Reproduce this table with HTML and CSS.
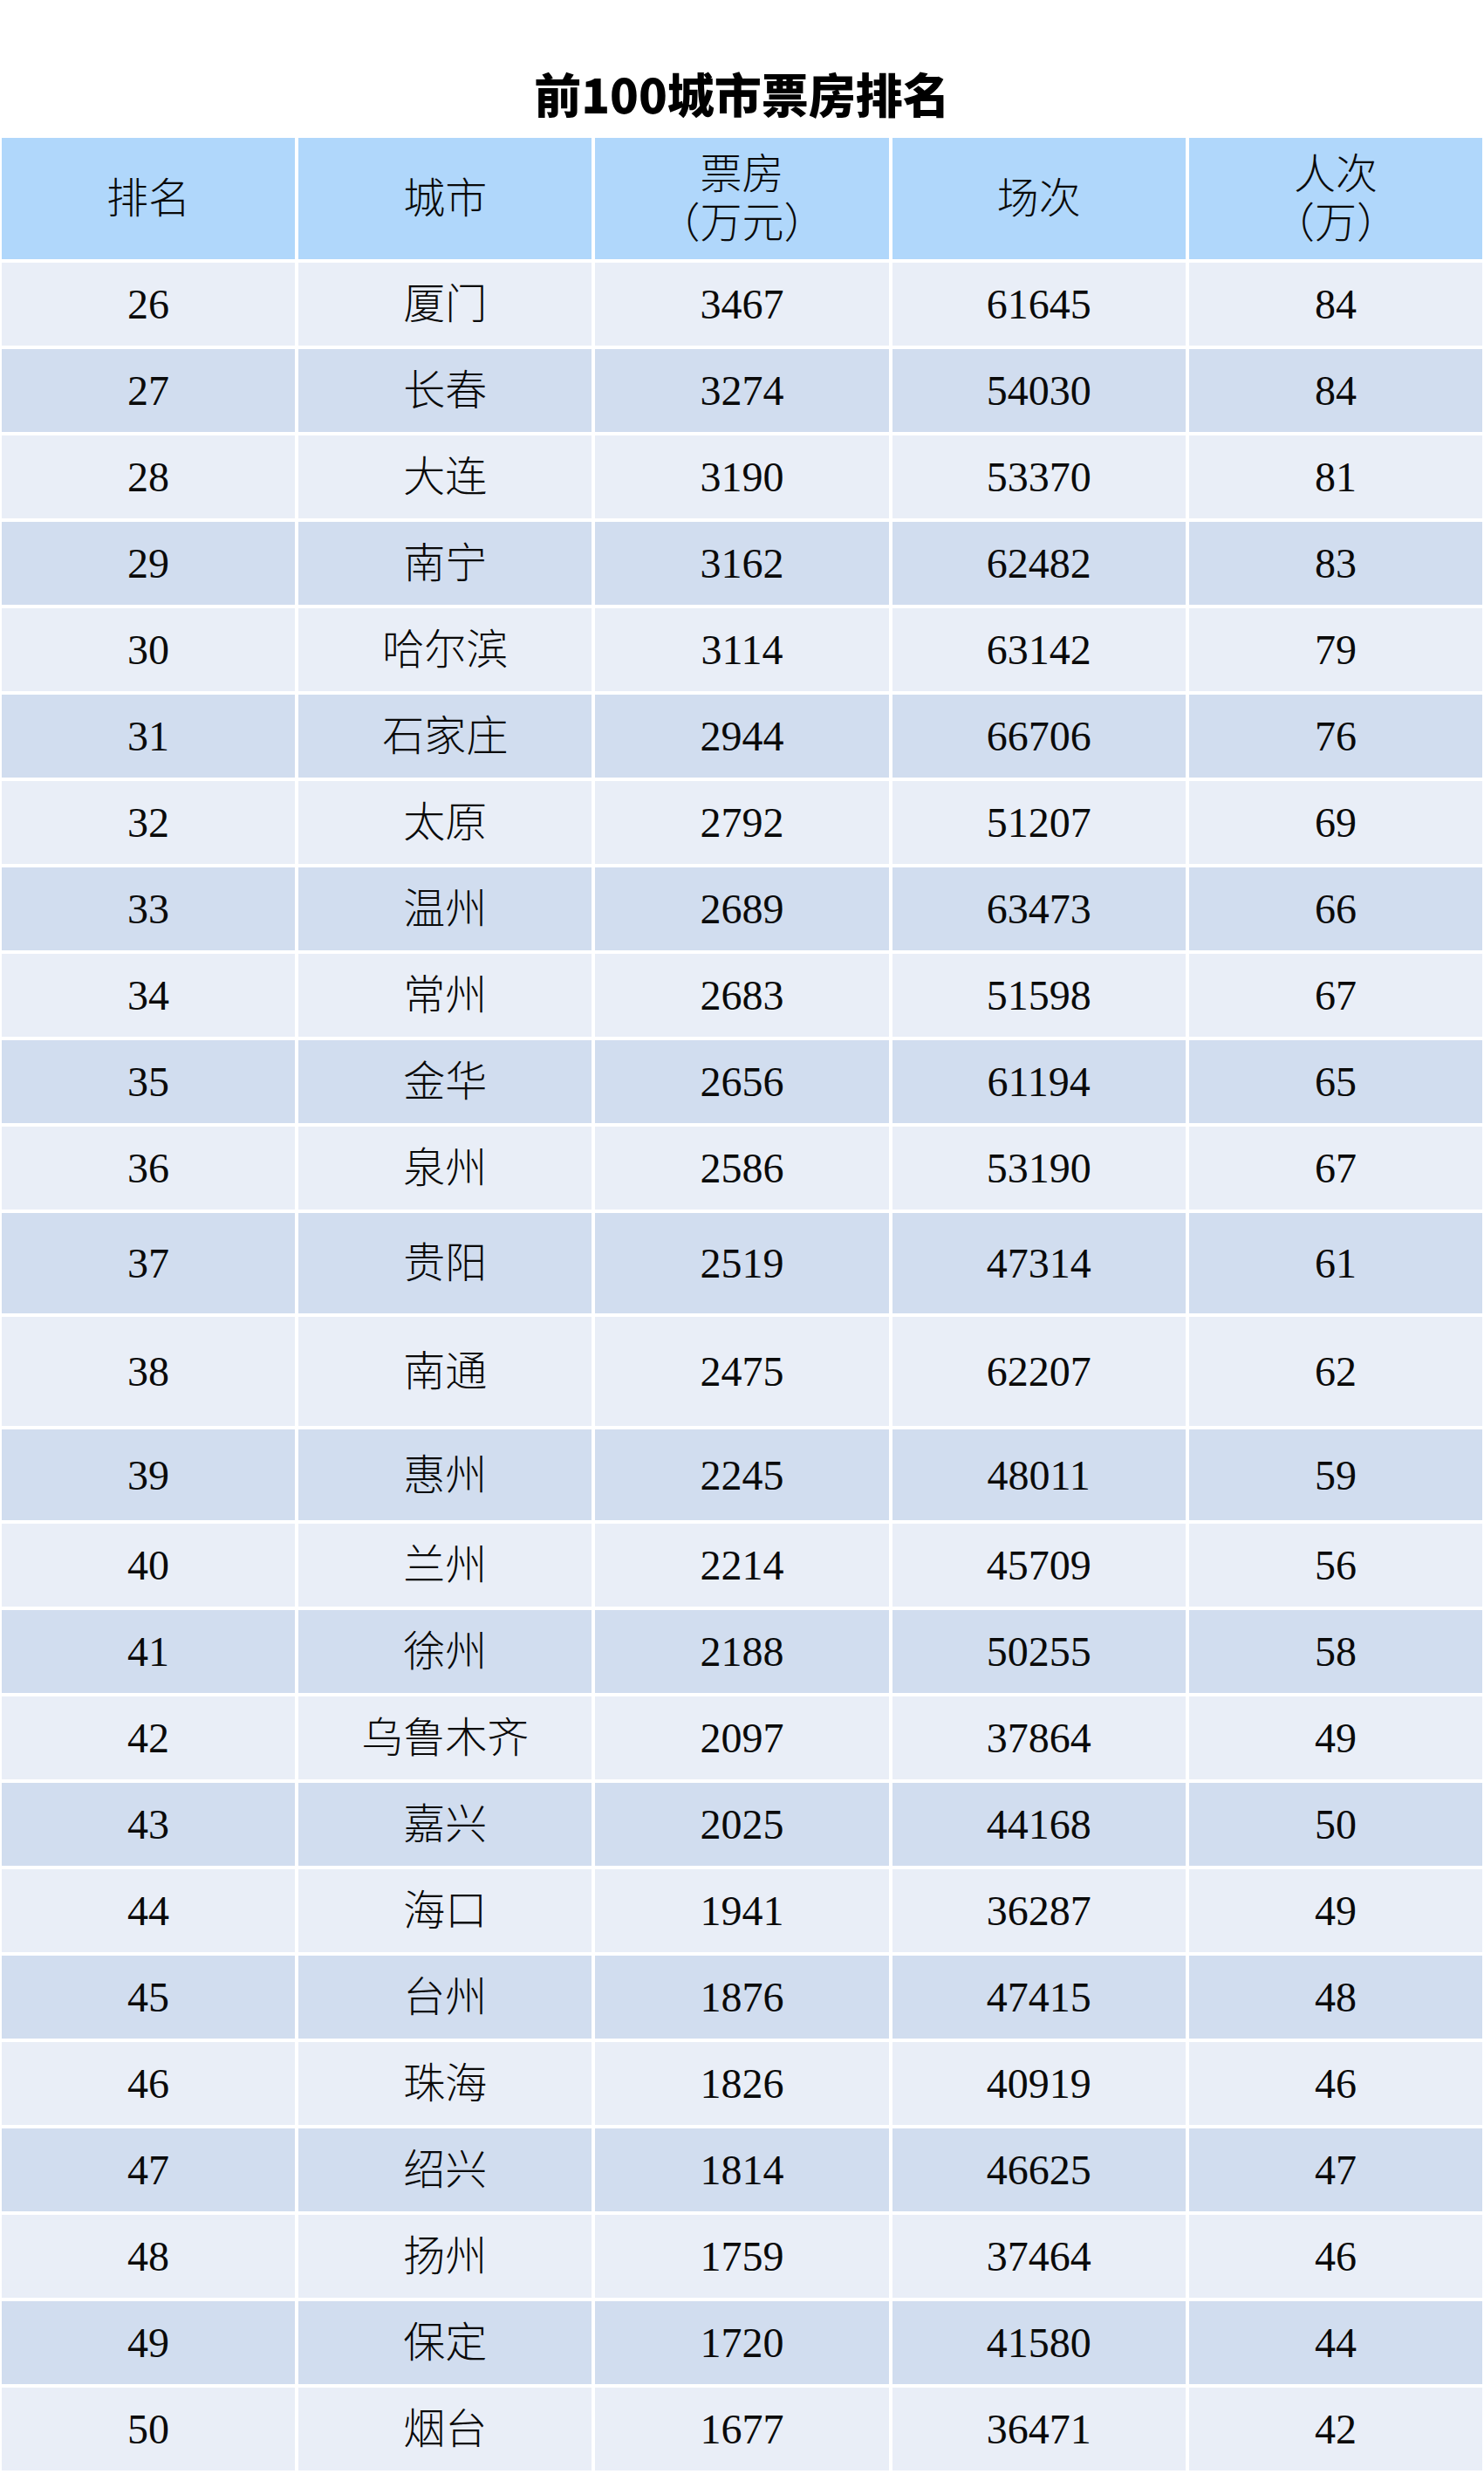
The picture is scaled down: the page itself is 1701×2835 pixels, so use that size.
FILE: index.html
```html
<!DOCTYPE html>
<html lang="zh-CN">
<head>
<meta charset="utf-8">
<title>前100城市票房排名</title>
<link rel="stylesheet" href="styles.css">
</head>
<body>
<div class="page">
  <h1 class="title">前100城市票房排名</h1>
  <div class="table">
    <div class="row head">
      <div class="cell">排名</div>
      <div class="cell">城市</div>
      <div class="cell two"><span>票房</span><span>（万元）</span></div>
      <div class="cell">场次</div>
      <div class="cell two"><span>人次</span><span>（万）</span></div>
    </div>
    <div class="row odd"><div class="cell">26</div><div class="cell">厦门</div><div class="cell">3467</div><div class="cell">61645</div><div class="cell">84</div></div>
    <div class="row even"><div class="cell">27</div><div class="cell">长春</div><div class="cell">3274</div><div class="cell">54030</div><div class="cell">84</div></div>
    <div class="row odd"><div class="cell">28</div><div class="cell">大连</div><div class="cell">3190</div><div class="cell">53370</div><div class="cell">81</div></div>
    <div class="row even"><div class="cell">29</div><div class="cell">南宁</div><div class="cell">3162</div><div class="cell">62482</div><div class="cell">83</div></div>
    <div class="row odd"><div class="cell">30</div><div class="cell">哈尔滨</div><div class="cell">3114</div><div class="cell">63142</div><div class="cell">79</div></div>
    <div class="row even"><div class="cell">31</div><div class="cell">石家庄</div><div class="cell">2944</div><div class="cell">66706</div><div class="cell">76</div></div>
    <div class="row odd"><div class="cell">32</div><div class="cell">太原</div><div class="cell">2792</div><div class="cell">51207</div><div class="cell">69</div></div>
    <div class="row even"><div class="cell">33</div><div class="cell">温州</div><div class="cell">2689</div><div class="cell">63473</div><div class="cell">66</div></div>
    <div class="row odd"><div class="cell">34</div><div class="cell">常州</div><div class="cell">2683</div><div class="cell">51598</div><div class="cell">67</div></div>
    <div class="row even"><div class="cell">35</div><div class="cell">金华</div><div class="cell">2656</div><div class="cell">61194</div><div class="cell">65</div></div>
    <div class="row odd"><div class="cell">36</div><div class="cell">泉州</div><div class="cell">2586</div><div class="cell">53190</div><div class="cell">67</div></div>
    <div class="row even tall"><div class="cell">37</div><div class="cell">贵阳</div><div class="cell">2519</div><div class="cell">47314</div><div class="cell">61</div></div>
    <div class="row odd taller"><div class="cell">38</div><div class="cell">南通</div><div class="cell">2475</div><div class="cell">62207</div><div class="cell">62</div></div>
    <div class="row even mid"><div class="cell">39</div><div class="cell">惠州</div><div class="cell">2245</div><div class="cell">48011</div><div class="cell">59</div></div>
    <div class="row odd"><div class="cell">40</div><div class="cell">兰州</div><div class="cell">2214</div><div class="cell">45709</div><div class="cell">56</div></div>
    <div class="row even"><div class="cell">41</div><div class="cell">徐州</div><div class="cell">2188</div><div class="cell">50255</div><div class="cell">58</div></div>
    <div class="row odd"><div class="cell">42</div><div class="cell">乌鲁木齐</div><div class="cell">2097</div><div class="cell">37864</div><div class="cell">49</div></div>
    <div class="row even"><div class="cell">43</div><div class="cell">嘉兴</div><div class="cell">2025</div><div class="cell">44168</div><div class="cell">50</div></div>
    <div class="row odd"><div class="cell">44</div><div class="cell">海口</div><div class="cell">1941</div><div class="cell">36287</div><div class="cell">49</div></div>
    <div class="row even"><div class="cell">45</div><div class="cell">台州</div><div class="cell">1876</div><div class="cell">47415</div><div class="cell">48</div></div>
    <div class="row odd"><div class="cell">46</div><div class="cell">珠海</div><div class="cell">1826</div><div class="cell">40919</div><div class="cell">46</div></div>
    <div class="row even"><div class="cell">47</div><div class="cell">绍兴</div><div class="cell">1814</div><div class="cell">46625</div><div class="cell">47</div></div>
    <div class="row odd"><div class="cell">48</div><div class="cell">扬州</div><div class="cell">1759</div><div class="cell">37464</div><div class="cell">46</div></div>
    <div class="row even"><div class="cell">49</div><div class="cell">保定</div><div class="cell">1720</div><div class="cell">41580</div><div class="cell">44</div></div>
    <div class="row odd"><div class="cell">50</div><div class="cell">烟台</div><div class="cell">1677</div><div class="cell">36471</div><div class="cell">42</div></div>
  </div>
</div>
</body>
</html>
```
FILE: styles.css
```css
html, body {
  margin: 0;
  padding: 0;
  background: #ffffff;
}

.page {
  width: 1701px;
  background: #ffffff;
}

.title {
  margin: 0;
  height: 158px;
  box-sizing: border-box;
  padding-top: 72px;
  text-align: center;
  font-family: "Noto Sans CJK SC", "Noto Sans", sans-serif;
  font-weight: 900;
  font-size: 54px;
  line-height: 70px;
  color: #000000;
}

.table {
  display: flex;
  flex-direction: column;
  gap: 4px;
  padding: 0 2px 2px;
}

.row {
  display: grid;
  grid-template-columns: repeat(5, 1fr);
  column-gap: 4px;
  height: 95px;
}

.row.head { height: 139px; }
.row.tall { height: 115px; }
.row.taller { height: 125px; }
.row.mid { height: 104px; }

.cell {
  display: flex;
  flex-direction: column;
  align-items: center;
  justify-content: center;
  font-family: "Liberation Serif", "Noto Sans CJK SC", serif;
  font-weight: 300;
  font-size: 48px;
  line-height: 51px;
  color: #0a0a0a;
  text-align: center;
  text-spacing-trim: space-all;
}

.head .cell { background: #b0d7fb; }
.odd .cell { background: #e9eef7; }
.even .cell { background: #d1ddef; }

.two span {
  display: block;
  line-height: 56px;
  text-spacing-trim: space-all;
}
```
